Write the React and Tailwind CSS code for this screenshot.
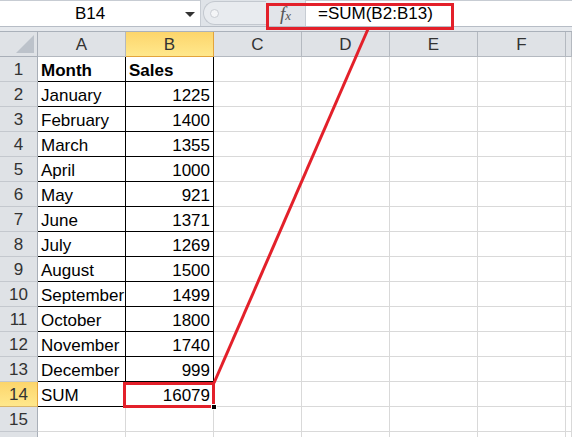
import React from 'react';

const rows = [
  ['Month', 'Sales', true],
  ['January', '1225'],
  ['February', '1400'],
  ['March', '1355'],
  ['April', '1000'],
  ['May', '921'],
  ['June', '1371'],
  ['July', '1269'],
  ['August', '1500'],
  ['September', '1499'],
  ['October', '1800'],
  ['November', '1740'],
  ['December', '999'],
  ['SUM', '16079'],
  [null, null],
  [null, null],
];

const cols = ['A', 'B', 'C', 'D', 'E', 'F', ''];

const FormulaBar = () => (
  <div className="flex h-[27px] bg-[#dfe3e8] border-b border-[#b7bdc6]">
    {/* Name box */}
    <div className="relative flex items-center w-[201px] h-full bg-white border-t border-r border-[#c7ccd3]">
      <span className="w-[180px] text-center text-[17px] text-black">B14</span>
      <span className="absolute left-[185px] top-[11px] w-0 h-0 border-l-[5px] border-r-[5px] border-t-[5px] border-l-transparent border-r-transparent border-t-[#333]" />
    </div>
    {/* Capsule */}
    <div className="flex items-center w-[65px] h-full pl-[2px]">
      <div className="flex items-center h-[24px] w-full rounded-l-full bg-[#e8ebef] border border-r-0 border-[#c3c8cf] pl-[6px]">
        <span className="w-[9px] h-[9px] rounded-full bg-[#f4f5f7] border border-[#c9cdd3]" />
      </div>
    </div>
    {/* fx */}
    <div className="flex items-center justify-center w-[40px] h-full bg-[#e2e5ea] border-r border-[#c7ccd3]">
      <span className="font-['Liberation_Serif',serif] italic text-[19px] text-[#555] leading-none">
        f<span className="text-[13px]">x</span>
      </span>
    </div>
    <div className="flex items-center flex-1 h-full bg-white border-t border-[#c7ccd3] pl-[12px]">
      <span className="text-[17px] text-black">=SUM(B2:B13)</span>
    </div>
  </div>
);

export default function App() {
  return (
    <div className="relative w-[572px] h-[437px] overflow-hidden bg-white font-['Liberation_Sans',Arial,sans-serif]">
      <FormulaBar />
      <div className="h-[5px] bg-[#e6e9ed] border-b border-[#aab1ba]" />

      <div className="grid grid-cols-[38px_repeat(6,88px)_1fr]">
        {/* Header row */}
        <div className="relative h-[25px] bg-[#dfe2e6] border-r border-b border-[#a9afb8]">
          <span className="absolute right-[3px] bottom-[3px] w-0 h-0 border-l-[18px] border-l-transparent [border-bottom:18px_solid_#bcc2ca]" />
        </div>
        {cols.map((c) =>
          c === 'B' ? (
            <div
              key={c}
              className="flex items-center justify-center h-[25px] pt-[2px] bg-gradient-to-b from-[#fcd56b] to-[#ffe88c] border-r border-b border-[#e3a43c] text-[17px] text-[#333]"
            >
              {c}
            </div>
          ) : (
            <div
              key={c || 'G'}
              className="flex items-center justify-center h-[25px] pt-[2px] bg-[#dfe2e6] border-r border-b border-[#b4b9c0] text-[17px] text-[#333]"
            >
              {c}
            </div>
          )
        )}

        {rows.map((r, i) => {
          const n = i + 1;
          const boxed = n <= 14;
          return (
            <React.Fragment key={n}>
              <div
                className={`flex items-center justify-center h-[25px] pt-[2px] border-r border-b text-[17px] text-[#333] ${
                  n === 14
                    ? 'bg-gradient-to-b from-[#fcd56b] to-[#ffe88c] border-r-[#e3a43c] border-b-[#d9b56a]'
                    : 'bg-[#dfe2e6] border-r-[#a9afb8] border-b-[#c4c8ce]'
                }`}
              >
                {n <= 15 ? n : ''}
              </div>
              <div
                className={`flex items-end h-[25px] pl-[3px] border-r border-b leading-[20px] text-[17px] text-black ${
                  boxed ? 'border-black' : 'border-[#d9d9d9]'
                } ${r[2] ? 'font-bold' : ''}`}
              >
                {r[0]}
              </div>
              <div
                className={`flex items-end h-[25px] px-[3px] border-r border-b leading-[20px] text-[17px] text-black ${
                  boxed ? 'border-black' : 'border-[#d9d9d9]'
                } ${r[2] ? 'font-bold justify-start' : 'justify-end'}`}
              >
                {r[1]}
              </div>
              {[0, 1, 2, 3, 4].map((k) => (
                <div key={k} className="h-[25px] border-r border-b border-[#d9d9d9]" />
              ))}
            </React.Fragment>
          );
        })}
      </div>

      {/* Active cell B14 highlight */}
      <div className="absolute left-[123px] top-[382px] w-[92px] h-[26px] border-[3px] border-[#e3202a]" />
      <div className="absolute left-[211px] top-[404px] w-[6px] h-[6px] bg-black border border-white" />

      {/* Formula callout */}
      <div className="absolute left-[266px] top-[3px] w-[188px] h-[27px] border-[3px] border-[#e3202a]" />
      <svg className="absolute left-0 top-0" width="572" height="437">
        <line x1="368" y1="29" x2="214" y2="383" stroke="#e3202a" strokeWidth="3" />
      </svg>
    </div>
  );
}
